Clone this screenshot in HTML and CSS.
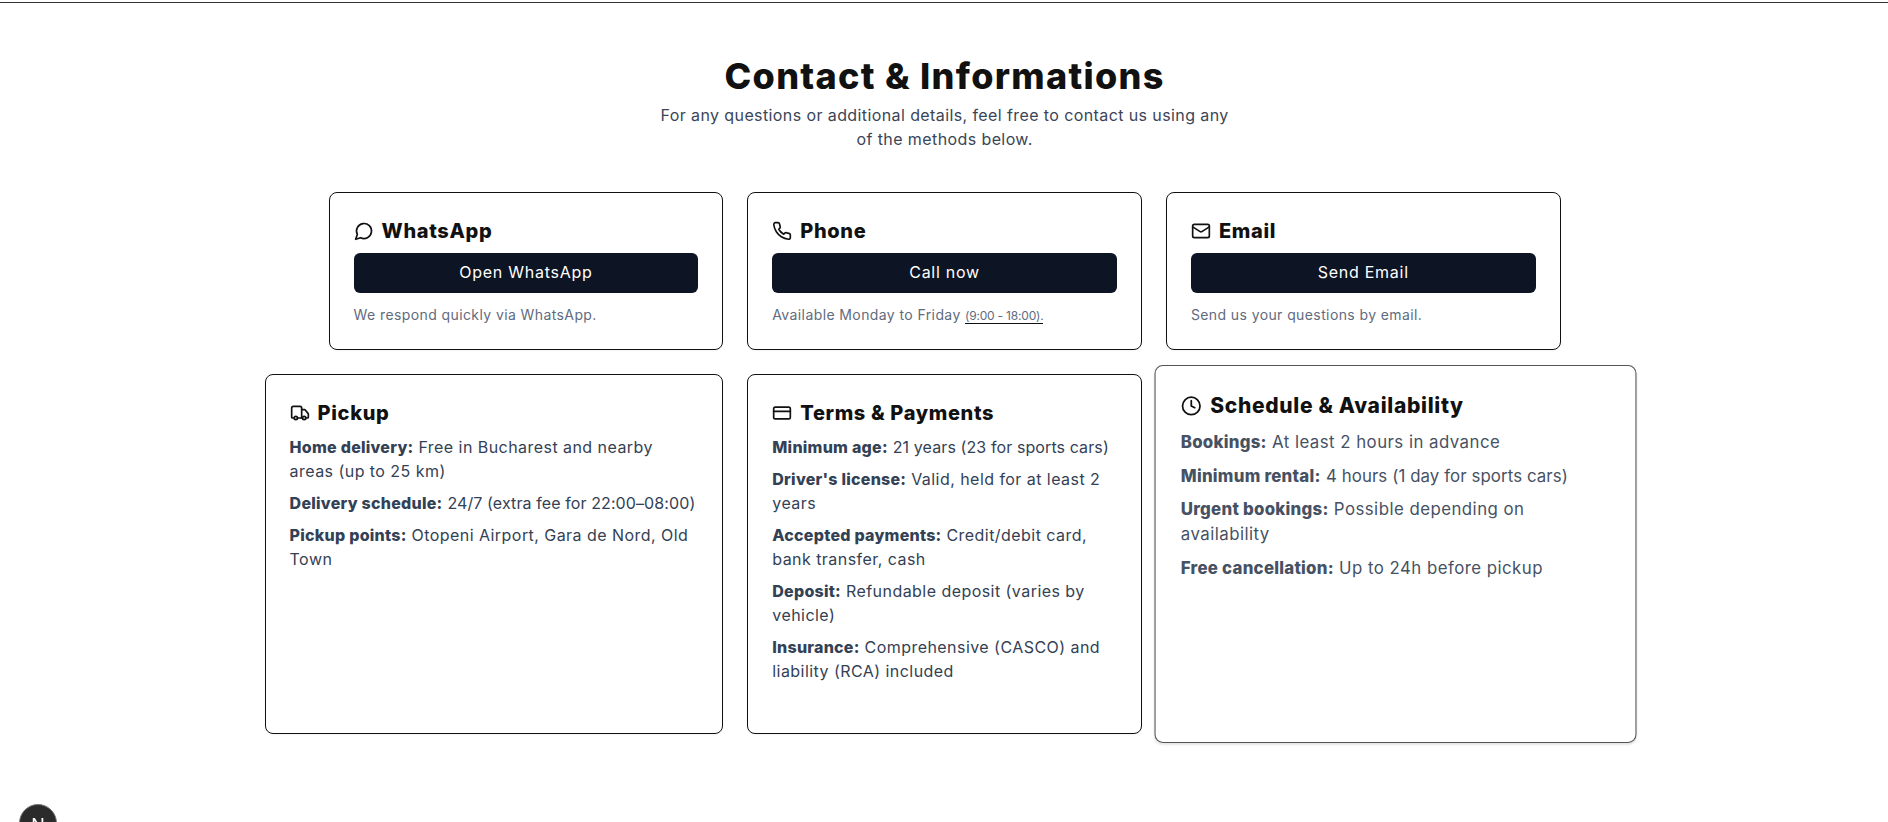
FILE: index.html
```html
<!DOCTYPE html>
<html lang="en">
<head>
    <meta charset="UTF-8">
    <meta name="viewport" content="width=device-width, initial-scale=1.0">
    <title>Contact &amp; Informations</title>
    <link rel="stylesheet" href="styles.css">
</head>
<body>
    <div class="top-rule"></div>

    <section class="contact">
        <div class="intro">
            <h1>Contact &amp; Informations</h1>
            <p>For any questions or additional details, feel free to contact us using any of the methods below.</p>
        </div>

        <div class="row row-methods">
            <div class="card">
                <h2 class="card-title">
                    <svg class="icon" viewBox="0 0 24 24"><path d="M7.9 20A9 9 0 1 0 4 16.1L2 22Z"/></svg>
                    WhatsApp
                </h2>
                <a class="btn">Open WhatsApp</a>
                <p class="note">We respond quickly via WhatsApp.</p>
            </div>
            <div class="card">
                <h2 class="card-title">
                    <svg class="icon" viewBox="0 0 24 24"><path d="M22 16.92v3a2 2 0 0 1-2.18 2 19.79 19.79 0 0 1-8.63-3.07 19.5 19.5 0 0 1-6-6 19.79 19.79 0 0 1-3.07-8.67A2 2 0 0 1 4.11 2h3a2 2 0 0 1 2 1.72 12.84 12.84 0 0 0 .7 2.81 2 2 0 0 1-.45 2.11L8.09 9.91a16 16 0 0 0 6 6l1.27-1.27a2 2 0 0 1 2.11-.45 12.84 12.84 0 0 0 2.81.7A2 2 0 0 1 22 16.92z"/></svg>
                    Phone
                </h2>
                <a class="btn">Call now</a>
                <p class="note">Available Monday to Friday <span class="hours">(9:00 - 18:00).</span></p>
            </div>
            <div class="card">
                <h2 class="card-title">
                    <svg class="icon" viewBox="0 0 24 24"><rect x="2" y="4" width="20" height="16" rx="2"/><path d="m22 7-8.97 5.7a1.94 1.94 0 0 1-2.06 0L2 7"/></svg>
                    Email
                </h2>
                <a class="btn">Send Email</a>
                <p class="note">Send us your questions by email.</p>
            </div>
        </div>

        <div class="row row-details">
            <div class="card">
                <h2 class="card-title">
                    <svg class="icon" viewBox="0 0 24 24"><path d="M14 18V6a2 2 0 0 0-2-2H4a2 2 0 0 0-2 2v11a1 1 0 0 0 1 1h2"/><path d="M15 18H9"/><path d="M19 18h2a1 1 0 0 0 1-1v-3.65a1 1 0 0 0-.22-.624l-3.48-4.35A1 1 0 0 0 17.52 8H14"/><circle cx="17" cy="18" r="2"/><circle cx="7" cy="18" r="2"/></svg>
                    Pickup
                </h2>
                <div class="info">
                    <p><strong>Home delivery:</strong> Free in Bucharest and nearby areas (up to 25 km)</p>
                    <p><strong>Delivery schedule:</strong> <span class="tight">24/7 (extra fee for 22:00–08:00)</span></p>
                    <p><strong>Pickup points:</strong> Otopeni Airport, Gara de Nord, Old Town</p>
                </div>
            </div>
            <div class="card">
                <h2 class="card-title">
                    <svg class="icon" viewBox="0 0 24 24"><rect x="2" y="5" width="20" height="14" rx="2"/><line x1="2" y1="10" x2="22" y2="10"/></svg>
                    Terms &amp; Payments
                </h2>
                <div class="info">
                    <p><strong>Minimum age:</strong> <span class="tight">21 years (23 for sports cars)</span></p>
                    <p><strong>Driver's license:</strong> Valid, held for at least 2 years</p>
                    <p><strong>Accepted payments:</strong> Credit/debit card, bank transfer, cash</p>
                    <p><strong>Deposit:</strong> Refundable deposit (varies by vehicle)</p>
                    <p><strong>Insurance:</strong> Comprehensive (CASCO) and liability (RCA) included</p>
                </div>
            </div>
            <div class="card card-hover">
                <h2 class="card-title">
                    <svg class="icon" viewBox="0 0 24 24"><circle cx="12" cy="12" r="10"/><polyline points="12 6 12 12 16 14"/></svg>
                    Schedule &amp; Availability
                </h2>
                <div class="info">
                    <p><strong>Bookings:</strong> At least 2 hours in advance</p>
                    <p><strong>Minimum rental:</strong> <span class="tight">4 hours (1 day for sports cars)</span></p>
                    <p><strong>Urgent bookings:</strong> Possible depending on availability</p>
                    <p><strong>Free cancellation:</strong> Up to 24h before pickup</p>
                </div>
            </div>
        </div>
    </section>

    <div class="dev-badge">N</div>
</body>
</html>
```

FILE: styles.css
```css
* {
    box-sizing: border-box;
}

body {
    margin: 0;
    min-height: 100vh;
    background: #fff;
    color: #111;
    font-family: "Inter", "Liberation Sans", sans-serif;
}

.top-rule {
    height: 3px;
    border-bottom: 1px solid #333;
}

.contact {
    width: 1360px;
    margin-left: 264.6px;
    padding-top: 53px;
}

.intro {
    width: 576px;
    margin: 0 auto 41px;
    text-align: center;
}

h1 {
    margin: 0 0 7px;
    font-size: 36px;
    line-height: 40px;
    font-weight: 800;
    letter-spacing: 1.3px;
}

.intro p {
    margin: 0;
    font-size: 16px;
    line-height: 24px;
    color: #3a4557;
    letter-spacing: 0.4px;
}

.row {
    display: grid;
    gap: 24px;
}

.row-methods {
    width: 1232px;
    margin: 0 auto 24px;
    grid-template-columns: repeat(3, 1fr);
}

.row-details {
    grid-template-columns: 1fr 394.67px 1fr;
    height: 360px;
}

.card {
    display: flex;
    flex-direction: column;
    padding: 24px;
    background: #fff;
    border: 1px solid #111;
    border-radius: 8px;
    box-shadow: 0 1px 2px rgba(0, 0, 0, 0.05);
}

.card-hover {
    transform: scale(1.05);
    border-color: #555;
    box-shadow: 0 1px 2px rgba(0, 0, 0, 0.1);
}

.card-hover .info p {
    color: #465163;
}

.card-title {
    display: flex;
    align-items: center;
    gap: 8px;
    margin: 0 0 8px;
    font-size: 20px;
    line-height: 28px;
    font-weight: 800;
    letter-spacing: 0.65px;
}

.icon {
    width: 20px;
    height: 20px;
    flex: none;
    fill: none;
    stroke: #111;
    stroke-width: 2;
    stroke-linecap: round;
    stroke-linejoin: round;
}

.btn {
    display: flex;
    align-items: center;
    justify-content: center;
    height: 40px;
    padding-bottom: 2px;
    background: #0d1423;
    color: #fff;
    border-radius: 6px;
    font-size: 16px;
    font-weight: 400;
    letter-spacing: 0.75px;
}

.note {
    margin: 12px 0 0;
    font-size: 14px;
    line-height: 20px;
    color: #5f6b7e;
    letter-spacing: 0.4px;
}

.hours {
    font-size: 12px;
    line-height: 1;
    letter-spacing: -0.2px;
    border-bottom: 1px solid #111;
}

.info p {
    margin: 0 0 8px;
    font-size: 16px;
    line-height: 24px;
    color: #334155;
    letter-spacing: 0.45px;
}

.info strong {
    font-weight: 800;
    letter-spacing: 0.25px;
}

.tight {
    letter-spacing: 0.1px;
}

.dev-badge {
    position: fixed;
    left: 19px;
    top: 804px;
    display: flex;
    justify-content: center;
    width: 38px;
    height: 38px;
    padding-top: 10px;
    border: 1px solid #777;
    border-radius: 50%;
    background: #2b2b2b;
    color: #fff;
    font-size: 18px;
    font-weight: 400;
}
```
